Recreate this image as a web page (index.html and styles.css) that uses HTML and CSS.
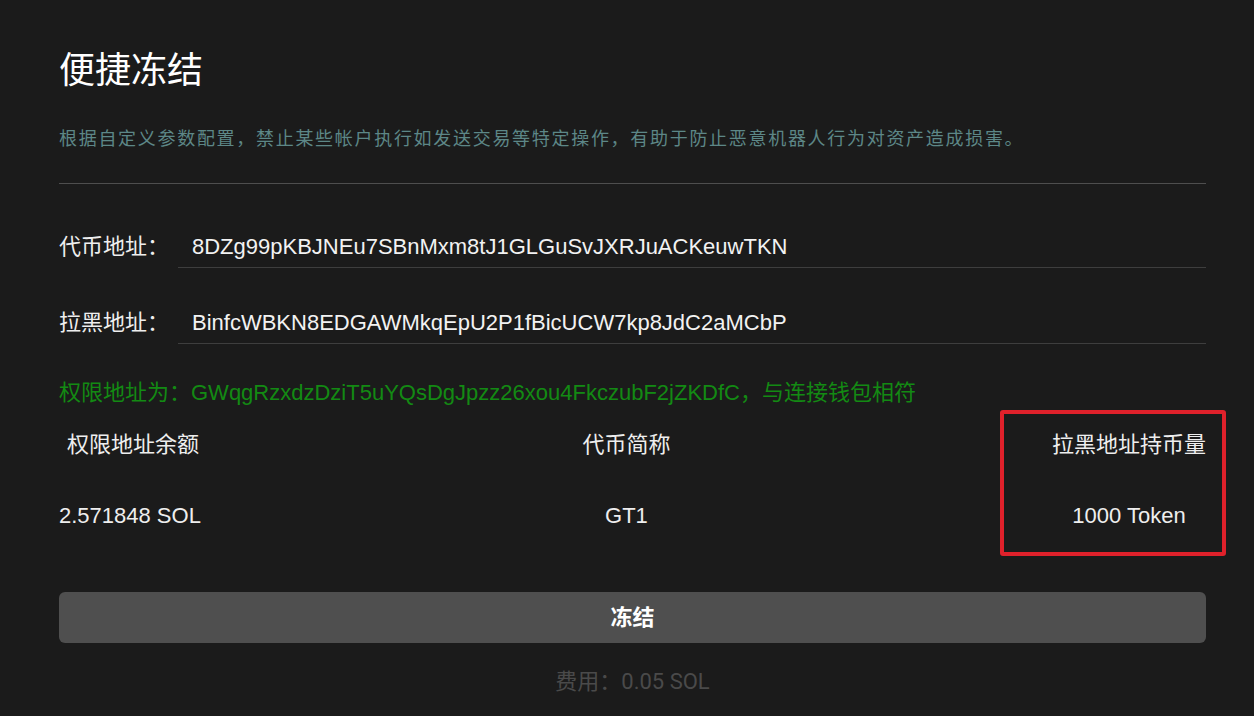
FILE: index.html
```html
<!DOCTYPE html>
<html lang="zh-CN">

<head>
    <meta charset="UTF-8">
    <meta name="viewport" content="width=device-width, initial-scale=1.0">
    <title>便捷冻结</title>
    <link rel="stylesheet" href="styles.css">
</head>

<body>
    <div class="panel">
        <h1 class="title">便捷冻结</h1>
        <p class="desc">根据自定义参数配置，禁止某些帐户执行如发送交易等特定操作，有助于防止恶意机器人行为对资产造成损害。</p>
        <div class="divider"></div>

        <form class="form" autocomplete="off">
            <div class="row">
                <label class="label">代币地址：</label>
                <input type="text" class="field" value="8DZg99pKBJNEu7SBnMxm8tJ1GLGuSvJXRJuACKeuwTKN">
            </div>
            <div class="row">
                <label class="label">拉黑地址：</label>
                <input type="text" class="field" value="BinfcWBKN8EDGAWMkqEpU2P1fBicUCW7kp8JdC2aMCbP">
            </div>
        </form>

        <p class="auth">权限地址为：GWqgRzxdzDziT5uYQsDgJpzz26xou4FkczubF2jZKDfC，与连接钱包相符</p>

        <div class="stats">
            <div class="stat">
                <div class="stat-title">&nbsp;权限地址余额</div>
                <div class="stat-value">2.571848 SOL</div>
            </div>
            <div class="stat">
                <div class="stat-title">代币简称</div>
                <div class="stat-value">GT1</div>
            </div>
            <div class="stat mark">
                <div class="stat-title">拉黑地址持币量</div>
                <div class="stat-value">1000 Token</div>
            </div>
        </div>

        <button class="submit">冻结</button>
        <p class="fee">费用：0.05 SOL</p>
    </div>
</body>

</html>
```

FILE: styles.css
```css
* {
    margin: 0;
    padding: 0;
    box-sizing: border-box;
}

body {
    background: #1b1b1b;
    color: #eeeeee;
    font-family: "Liberation Sans", "Noto Sans CJK SC", sans-serif;
}

.panel {
    width: 1147px;
    margin-left: 59px;
    padding-top: 44px;
}

.title {
    font-size: 36px;
    font-weight: 400;
    line-height: 54px;
    color: #ffffff;
}

.desc {
    margin-top: 28px;
    font-size: 18px;
    line-height: 27px;
    letter-spacing: 1.7px;
    color: #5d8787;
}

.divider {
    margin-top: 30px;
    height: 1px;
    background: #4e4e4e;
}

.form {
    margin-top: 40px;
}

.row {
    display: flex;
    align-items: center;
    height: 44px;
}

.row + .row {
    margin-top: 32px;
}

.label {
    width: 119px;
    font-size: 22px;
    margin-top: -4px;
    color: #eeeeee;
}

.field {
    flex: 1;
    height: 44px;
    padding-left: 14px;
    padding-top: 3px;
    background: transparent;
    border: 0;
    border-bottom: 1px solid #3e3e3e;
    outline: none;
    color: #f2f2f2;
    font-family: "Liberation Sans", "Noto Sans CJK SC", sans-serif;
    font-size: 22px;
}

.auth {
    margin-top: 34px;
    font-size: 22px;
    line-height: 30px;
    color: #138a13;
}

.stats {
    margin-top: 22px;
    display: flex;
    justify-content: space-between;
}

.stat {
    text-align: center;
    font-size: 22px;
    line-height: 30px;
}

.stat-value {
    margin-top: 41px;
}

.mark {
    position: relative;
}

.mark::after {
    content: "";
    position: absolute;
    right: -20px;
    top: -20px;
    width: 218px;
    height: 138px;
    border: 4px solid #e0212b;
    border-radius: 3px;
}

.submit {
    display: block;
    width: 100%;
    height: 51px;
    margin-top: 61px;
    padding-bottom: 5px;
    background: #4f4f4f;
    border: 0;
    border-radius: 6px;
    color: #ffffff;
    font-family: "Liberation Sans", "Noto Sans CJK SC", sans-serif;
    font-size: 22px;
    font-weight: 700;
    cursor: pointer;
}

.fee {
    margin-top: 24px;
    text-align: center;
    font-family: Roboto, "Noto Sans CJK SC", sans-serif;
    font-size: 22px;
    line-height: 30px;
    color: #4a4a4a;
}
```
